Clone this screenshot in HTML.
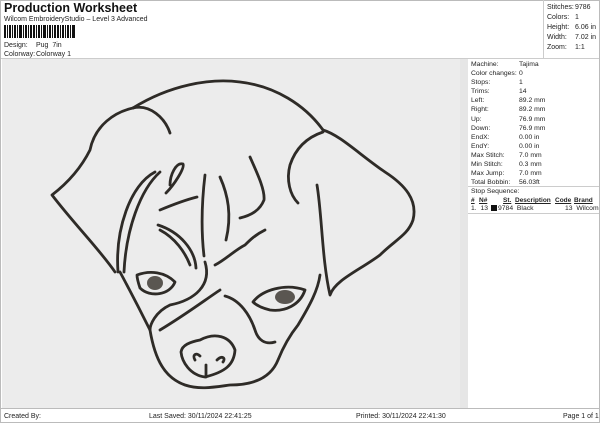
<!DOCTYPE html>
<html><head><meta charset="utf-8"><style>
*{margin:0;padding:0;box-sizing:border-box}
body{width:600px;height:424px;background:#fff;font-family:"Liberation Sans",sans-serif;color:#222;position:relative;overflow:hidden}
.a{position:absolute;white-space:nowrap}
.s{font-size:7px;line-height:9px}
</style></head><body>
<div class="a" style="left:0;top:0;width:600px;height:423px;border:1px solid #bbb"></div>
<div class="a" style="left:4px;top:1px;font-size:12.5px;font-weight:bold;color:#111">Production Worksheet</div>
<div class="a s" style="left:4px;top:15px">Wilcom EmbroideryStudio – Level 3 Advanced</div>
<svg class="a" style="left:4px;top:25px" width="72" height="13">
<g fill="#111">
<rect x="0" y="0" width="2" height="13"/><rect x="3" y="0" width="1" height="13"/><rect x="5" y="0" width="2" height="13"/><rect x="8" y="0" width="1" height="13"/><rect x="10" y="0" width="2" height="13"/><rect x="13" y="0" width="1" height="13"/><rect x="15" y="0" width="3" height="13"/><rect x="19" y="0" width="1" height="13"/><rect x="21" y="0" width="2" height="13"/><rect x="24" y="0" width="1" height="13"/><rect x="26" y="0" width="2" height="13"/><rect x="29" y="0" width="2" height="13"/><rect x="32" y="0" width="1" height="13"/><rect x="34" y="0" width="2" height="13"/><rect x="37" y="0" width="1" height="13"/><rect x="39" y="0" width="3" height="13"/><rect x="43" y="0" width="1" height="13"/><rect x="45" y="0" width="2" height="13"/><rect x="48" y="0" width="1" height="13"/><rect x="50" y="0" width="2" height="13"/><rect x="53" y="0" width="2" height="13"/><rect x="56" y="0" width="1" height="13"/><rect x="58" y="0" width="2" height="13"/><rect x="61" y="0" width="1" height="13"/><rect x="63" y="0" width="2" height="13"/><rect x="66" y="0" width="1" height="13"/><rect x="68" y="0" width="3" height="13"/>
</g></svg>
<div class="a s" style="left:4px;top:41px">Design:</div><div class="a s" style="left:36px;top:41px">Pug&nbsp; 7in</div>
<div class="a s" style="left:4px;top:50px">Colorway:</div><div class="a s" style="left:36px;top:50px">Colorway 1</div>
<div class="a" style="left:543px;top:0;width:1px;height:59px;background:#ccc"></div>
<div class="a s" style="left:547px;top:3px;line-height:10px">Stitches:<br>Colors:<br>Height:<br>Width:<br>Zoom:</div>
<div class="a s" style="left:575px;top:3px;line-height:10px">9786<br>1<br>6.06 in<br>7.02 in<br>1:1</div>
<div class="a" style="left:1px;top:58px;width:598px;height:1px;background:#ccc"></div>
<div class="a" style="left:2px;top:59px;width:466px;height:349px;background:#ececec;border-right:1px solid #ccc"></div>
<div class="a" style="left:460px;top:59px;width:8px;height:349px;background:#e6e6e6"></div>
<div class="a s" style="left:471px;top:60px;line-height:9.1px;font-size:6.8px">Machine:<br>Color changes:<br>Stops:<br>Trims:<br>Left:<br>Right:<br>Up:<br>Down:<br>EndX:<br>EndY:<br>Max Stitch:<br>Min Stitch:<br>Max Jump:<br>Total Bobbin:</div>
<div class="a s" style="left:519px;top:60px;line-height:9.1px;font-size:6.8px">Tajima<br>0<br>1<br>14<br>89.2 mm<br>89.2 mm<br>76.9 mm<br>76.9 mm<br>0.00 in<br>0.00 in<br>7.0 mm<br>0.3 mm<br>7.0 mm<br>56.03ft</div>
<div class="a" style="left:468px;top:186px;width:131px;height:1px;background:#ccc"></div>
<div class="a s" style="left:471px;top:187px;font-size:6.8px">Stop Sequence:</div>
<div class="a s" style="left:471px;top:196px;font-size:6.5px;font-weight:bold;text-decoration:underline">#</div>
<div class="a s" style="left:479px;top:196px;font-size:6.5px;font-weight:bold;text-decoration:underline">N#</div>
<div class="a s" style="left:503px;top:196px;font-size:6.5px;font-weight:bold;text-decoration:underline">St.</div>
<div class="a s" style="left:515px;top:196px;font-size:6.5px;font-weight:bold;text-decoration:underline">Description</div>
<div class="a s" style="left:555px;top:196px;font-size:6.5px;font-weight:bold;text-decoration:underline">Code</div>
<div class="a s" style="left:574px;top:196px;font-size:6.5px;font-weight:bold;text-decoration:underline">Brand</div>
<div class="a s" style="left:471px;top:204px;font-size:6.8px">1.&nbsp; 13</div>
<div class="a" style="left:491px;top:205px;width:6px;height:6px;background:#111"></div>
<div class="a s" style="left:498px;top:204px;font-size:6.8px">9784&nbsp; Black</div>
<div class="a s" style="left:565px;top:204px;font-size:6.8px">13&nbsp; Wilcom</div>
<div class="a" style="left:468px;top:213px;width:131px;height:1px;background:#ccc"></div>
<div class="a" style="left:1px;top:408px;width:598px;height:1px;background:#bbb"></div>
<div class="a s" style="left:4px;top:412px">Created By:</div>
<div class="a s" style="left:149px;top:412px">Last Saved: 30/11/2024 22:41:25</div>
<div class="a s" style="left:356px;top:412px">Printed: 30/11/2024 22:41:30</div>
<div class="a s" style="left:563px;top:412px">Page 1 of 1</div>
<svg class="a" style="left:0;top:0" width="600" height="424" fill="none" stroke="#2e2b27" stroke-width="2.8" stroke-linecap="round" stroke-linejoin="round">
<path d="M133,108 C170,85 210,78 240,82 C275,86 305,105 323,130"/>
<path d="M133,108 C150,104 165,118 170,133"/>
<path d="M133,108 C115,112 95,125 90,150 C80,170 65,185 52,195 C75,225 100,250 115,272"/>
<path d="M155,172 C130,185 115,230 118,272"/>
<path d="M160,172 C140,190 126,230 124,272"/>
<path d="M323,130 C340,135 360,155 385,172 C405,185 418,200 413,220 C408,235 395,240 380,255 C360,270 335,280 330,295 C322,260 322,215 317,185"/>
<path d="M323,132 C305,138 295,150 290,165 C286,180 290,195 298,203"/>
<path d="M120,272 C135,300 145,320 150,330 C155,360 165,378 185,385 C200,390 215,387 230,385 C250,385 270,380 278,360 C284,345 290,335 298,325 C310,305 318,290 320,275"/>
<path d="M160,230 C175,238 185,252 190,265"/>
<path d="M158,225 C180,232 195,250 196,268"/>
<path d="M166,193 C174,185 185,168 183,164 C176,162 170,175 170,185"/>
<path d="M160,210 C172,205 185,200 197,197"/>
<path d="M205,175 C202,200 201,230 204,256"/>
<path d="M220,177 C228,195 232,215 226,240"/>
<path d="M250,157 C258,175 265,190 264,200 C260,210 252,215 240,218"/>
<path d="M215,265 C225,260 235,250 245,245 C250,240 255,235 265,230"/>
<path d="M205,262 C212,285 195,300 170,305 C155,312 150,325 150,330"/>
<path d="M160,330 C185,315 205,300 220,290"/>
<path d="M225,296 C240,300 250,315 255,330 C258,340 265,345 275,342"/>
<path d="M137,275 C150,270 165,272 175,282 C170,295 150,298 140,288 C138,282 137,278 137,275Z"/>
<path d="M253,302 C262,290 285,283 305,290 C300,305 285,312 270,310 C262,308 256,305 253,302Z"/>
<path d="M200,340 C215,332 230,336 235,350 C234,365 225,372 205,377 C190,375 182,362 181,352 C182,345 190,342 200,340Z"/>
<path d="M195,360 C192,355 196,352 200,356"/>
<path d="M217,360 C222,355 226,358 223,362"/>
<path d="M206,365 L206,377"/>
</svg>
<svg class="a" style="left:0;top:0" width="600" height="424" fill="#5a5651"><ellipse cx="155" cy="283" rx="8" ry="7"/><ellipse cx="285" cy="297" rx="10" ry="7"/></svg>
</body></html>
